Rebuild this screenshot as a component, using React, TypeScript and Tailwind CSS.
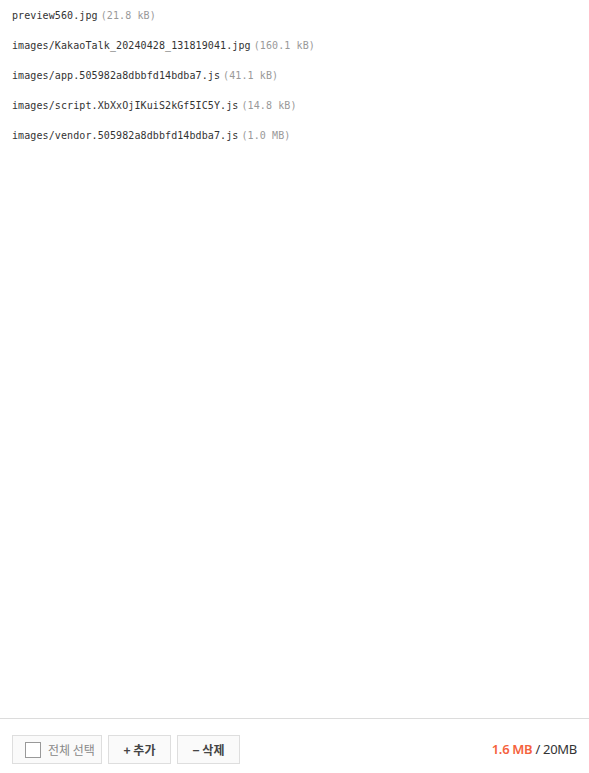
import React from "react";

const files = [
  { name: "preview560.jpg", size: "21.8 kB" },
  { name: "images/KakaoTalk_20240428_131819041.jpg", size: "160.1 kB" },
  { name: "images/app.505982a8dbbfd14bdba7.js", size: "41.1 kB" },
  { name: "images/script.XbXxOjIKuiS2kGf5IC5Y.js", size: "14.8 kB" },
  { name: "images/vendor.505982a8dbbfd14bdba7.js", size: "1.0 MB" },
];

const mono = { fontFamily: '"DejaVu Sans Mono", "Liberation Mono", monospace' };

export default function App() {
  return (
    <div className="flex h-[773px] w-[589px] flex-col bg-white" style={{ fontFamily: '"Noto Sans", "Noto Sans CJK KR", sans-serif' }}>
      <div className="flex-1">
        {files.map((f) => (
          <div key={f.name} className="flex h-[30px] items-center px-3 text-[10px] tracking-[0.1px]" style={mono}>
            <span className="text-[#333]">{f.name}</span>
            <span className="ml-[3px] text-[#999]">({f.size})</span>
          </div>
        ))}
      </div>
      <div className="flex items-center justify-between border-t border-[#dcdcdc] px-3 pb-[9px] pt-4">
        <div className="flex gap-[6px]">
          <button className="flex h-[29px] w-[90px] items-center gap-[7px] border border-[#dedede] bg-[#fafafa] pl-[12px] text-[12px] text-[#888]" style={{ fontFamily: '"Noto Sans CJK KR", sans-serif' }}>
            <span className="h-[16px] w-[16px] border border-[#999] bg-white" />
            <span>전체 선택</span>
          </button>
          <button className="flex h-[29px] w-[63px] items-center justify-center border border-[#dedede] bg-[#fafafa] text-[12px] font-bold text-[#444]" style={{ fontFamily: '"Noto Sans CJK KR", sans-serif' }}>
            + 추가
          </button>
          <button className="flex h-[29px] w-[63px] items-center justify-center border border-[#dedede] bg-[#fafafa] text-[12px] font-bold text-[#444]" style={{ fontFamily: '"Noto Sans CJK KR", sans-serif' }}>
            − 삭제
          </button>
        </div>
        <div className="text-[13px] tracking-[-0.3px] text-[#333]">
          <span className="font-semibold text-[#f5623d]">1.6 MB</span>
          <span> / 20MB</span>
        </div>
      </div>
    </div>
  );
}
